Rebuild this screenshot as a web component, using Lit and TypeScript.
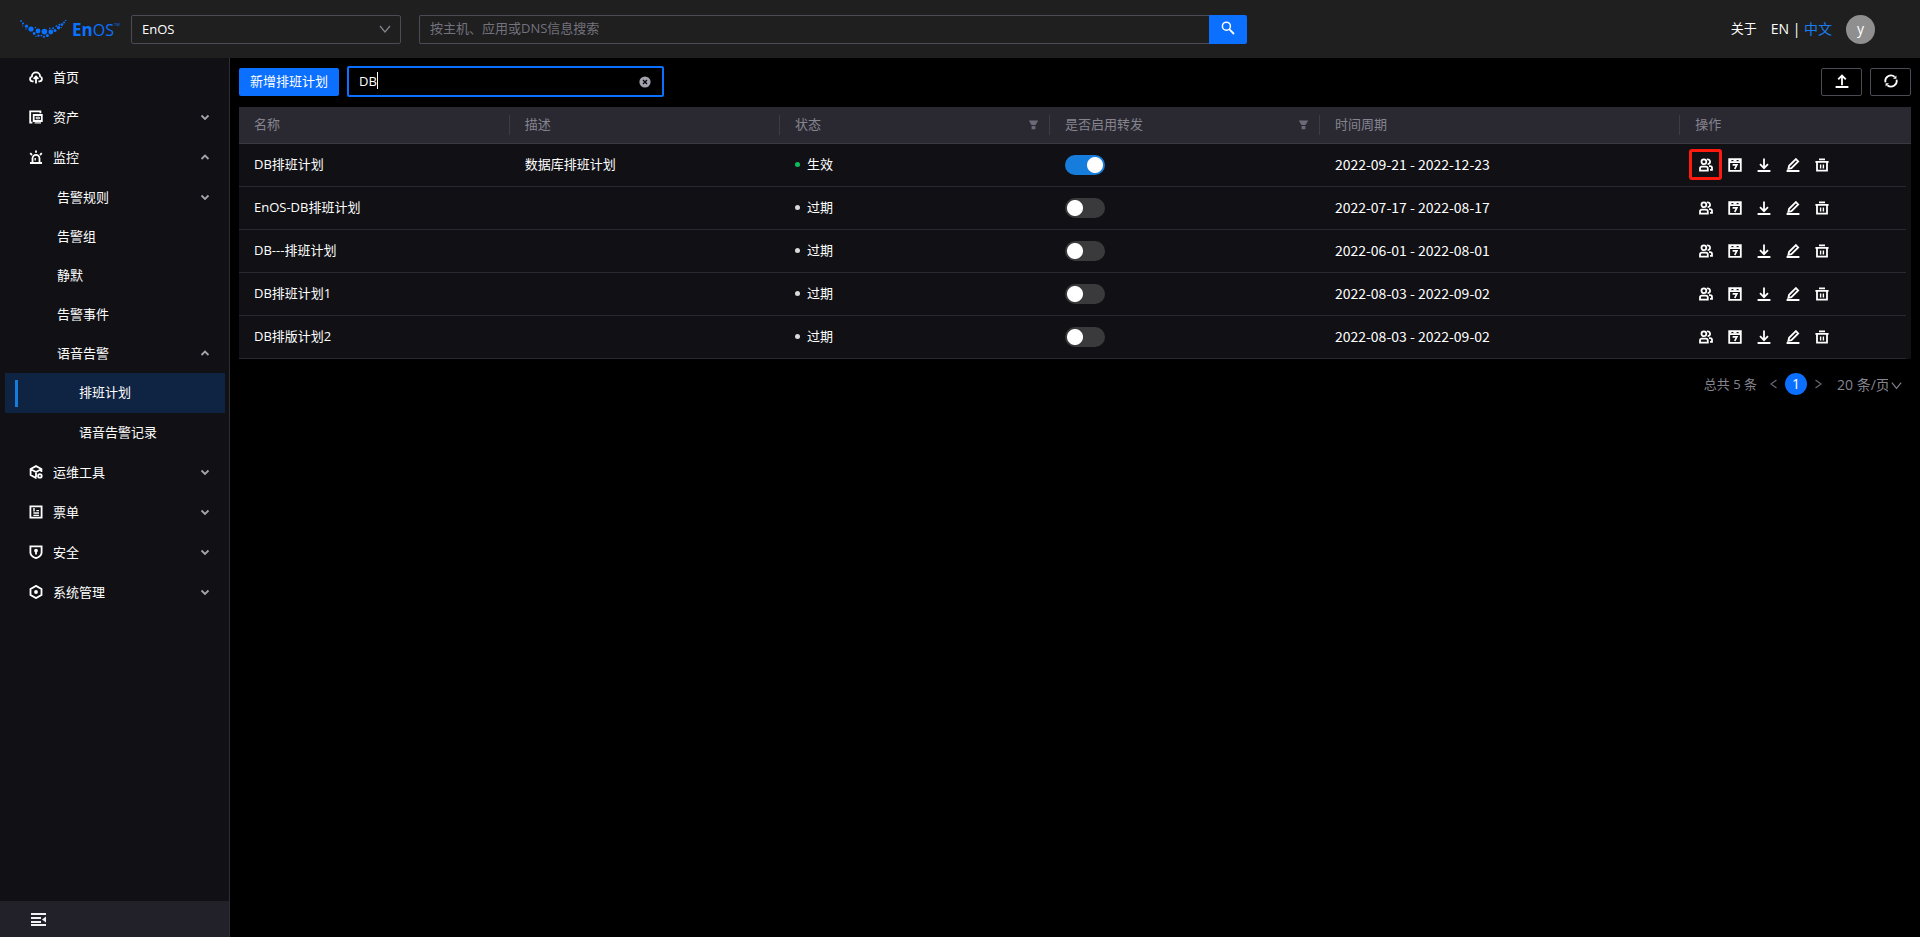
import { LitElement, html, css, svg, nothing } from "lit";
import { customElement, property, state } from "lit/decorators.js";
import { classMap } from "lit/directives/class-map.js";

const icons: Record<string, unknown> = {
  home: svg`<path d="M4.6 11.4H3.4A2.5 2.5 0 0 1 2.9 6.5 4.1 4.1 0 0 1 11.1 6.5 2.5 2.5 0 0 1 10.6 11.4H9.4" /><path d="M7 13.4V6.8M4.6 8.8 7 6.4l2.4 2.4" />`,
  asset: svg`<path d="M3.4 12.6H1.2V1.4H11.4V3.2" /><path d="M4.7 5H12.8V11H4.7Z" /><path d="M5.6 12.9H12" stroke-width="1.2" /><path d="M7.2 7.2H10.4V8.8H7.2Z" stroke-width="1" />`,
  alarm: svg`<path d="M1 13H13M3.5 13V8.4A3.5 3.5 0 0 1 10.5 8.4V13M7 .6V2.8M1.2 3.2 3 5M12.8 3.2 11 5" /><path d="M6.2 8V10.6" stroke-width="1.3" />`,
  tools: svg`<path d="M7.4 12.8 7 13 1.6 10V4L7 1.1 12.4 4V7M1.8 4.2 7 7 12.2 4.2M7 7V12.6" /><circle cx="10.9" cy="10.9" r="1.8" />`,
  ticket: svg`<path d="M1.4 1.4H12.6V12.6H1.4Z" /><path d="M5 3V6.4M7.4 5.6H10M4.4 8H10M4.4 10.4H10" stroke-width="1.4" />`,
  shield: svg`<path d="M1.4 1.4H12.6V7.4C12.6 10 10 12 7 13.2 4 12 1.4 10 1.4 7.4Z" /><circle cx="7" cy="5.6" r="1" /><path d="M7 6V9.6" />`,
  system: svg`<path d="M7 .9 12.5 4V10L7 13.1 1.5 10V4Z" /><circle cx="7" cy="7" r="1" fill="currentColor" />`,
  users: svg`<circle cx="4.9" cy="3.8" r="2.4" /><path d="M8 1.5A2.4 2.4 0 1 1 8.6 6.2" /><path d="M1 12.6V10.4A1.8 1.8 0 0 1 2.8 8.6H7A1.8 1.8 0 0 1 8.8 10.4V12.6ZM10 8.2H11.2A1.8 1.8 0 0 1 13 10V11.8H11" />`,
  calendar: svg`<path d="M1.2 1.2H12.8V12.8H1.2Z" /><path d="M1 4.1H13" stroke-width="1.8" /><path d="M2 2.6H3.4M5.4 2.6H8.6M10.6 2.6H12" stroke-width="2" /><path d="M4.6 6.9H8.9L6.7 11" stroke-width="1.6" />`,
  download: svg`<path d="M.6 13H13.4M7 .6V10M3 6.2 7 10.2 11 6.2" />`,
  edit: svg`<path d="M.6 13H13.4M2.4 10.8 3.1 7.8 9.9 1.1 12.2 3.4 5.4 10.2Z" />`,
  trash: svg`<path d="M.4 3.9H13.6M4 1.3H10M2 4V12.7H12V4" /><path d="M5.6 6.4V10.4M8.4 6.4V10.4" stroke-width="1.4" />`,
  upload: svg`<path d="M.6 13H13.4M7 11.2V1.8M3.2 5.4 7 1.6 10.8 5.4" />`,
  refresh: svg`<path d="M1.5 8.4A5.6 5.6 0 0 1 10.6 2.8M12.5 5.6A5.6 5.6 0 0 1 3.4 11.2" /><path d="M12.4 1.4V4.8H9ZM1.6 12.6V9.2H5Z" fill="currentColor" stroke="none" />`,
  down: svg`<path d="M3.5 5.5 7 9 10.5 5.5" />`,
  up: svg`<path d="M3.5 9 7 5.5 10.5 9" />`,
  search: svg`<circle cx="5.4" cy="5.2" r="4" stroke-width="1.5" /><path d="M8.2 8.2 13 13" />`,
  filter: svg`<path d="M1 2H13L9.6 7.6H4.4ZM4.6 9H9.4V13H4.6Z" fill="currentColor" stroke="none" />`,
  clear: svg`<circle cx="7" cy="7" r="5.6" fill="currentColor" stroke="none" /><path d="M5 5 9 9M9 5 5 9" stroke="#000" stroke-width="1.2" />`,
  prev: svg`<path d="M9.5 3 4 7 9.5 11" stroke-width="1.1" />`,
  next: svg`<path d="M4.5 3 10 7 4.5 11" stroke-width="1.1" />`,
  arrow: svg`<path d="M2 4 7 10 12 4" stroke-width="1.2" />`,
};

@customElement("app-icon")
export class AppIcon extends LitElement {
  @property() name = "";
  static styles = css`
    :host { display: inline-flex; flex: none; width: 14px; height: 14px; }
    svg { width: 100%; height: 100%; fill: none; stroke: currentColor; stroke-width: 1.8; }
  `;
  render() {
    return html`<svg viewBox="0 0 14 14" aria-hidden="true">${icons[this.name]}</svg>`;
  }
}

interface MenuItem {
  label: string;
  level: number;
  icon?: string;
  toggle?: "up" | "down";
  selected?: boolean;
}

const menu: MenuItem[] = [
  { label: "首页", level: 1, icon: "home" },
  { label: "资产", level: 1, icon: "asset", toggle: "down" },
  { label: "监控", level: 1, icon: "alarm", toggle: "up" },
  { label: "告警规则", level: 2, toggle: "down" },
  { label: "告警组", level: 2 },
  { label: "静默", level: 2 },
  { label: "告警事件", level: 2 },
  { label: "语音告警", level: 2, toggle: "up" },
  { label: "排班计划", level: 3, selected: true },
  { label: "语音告警记录", level: 3 },
  { label: "运维工具", level: 1, icon: "tools", toggle: "down" },
  { label: "票单", level: 1, icon: "ticket", toggle: "down" },
  { label: "安全", level: 1, icon: "shield", toggle: "down" },
  { label: "系统管理", level: 1, icon: "system", toggle: "down" },
];

interface Plan {
  name: string;
  desc: string;
  active: boolean;
  period: string;
}

const plans: Plan[] = [
  { name: "DB排班计划", desc: "数据库排班计划", active: true, period: "2022-09-21 - 2022-12-23" },
  { name: "EnOS-DB排班计划", desc: "", active: false, period: "2022-07-17 - 2022-08-17" },
  { name: "DB---排班计划", desc: "", active: false, period: "2022-06-01 - 2022-08-01" },
  { name: "DB排班计划1", desc: "", active: false, period: "2022-08-03 - 2022-09-02" },
  { name: "DB排版计划2", desc: "", active: false, period: "2022-08-03 - 2022-09-02" },
];

const actions = [
  ["users", "人员"],
  ["calendar", "日历"],
  ["download", "下载"],
  ["edit", "编辑"],
  ["trash", "删除"],
];

const logoDots = [
  [1, 2, 0.9], [3, 4.5, 1.1], [2.6, 7, 0.6], [6.5, 7.2, 1.6], [6, 10, 0.7], [11, 10, 2.6], [15.4, 8.5, 0.8],
  [14.2, 14.5, 1.4], [18, 12, 2.4], [18.5, 16.6, 1.2], [16, 17.4, 0.7], [21.4, 16.6, 0.9], [24.4, 12.6, 2.8], [24, 17.8, 1.1],
  [27.4, 16.5, 1.5], [30.8, 13, 2.4], [29.8, 9.4, 0.8], [33.2, 9.2, 1], [35, 11.6, 1.5], [38.6, 8.8, 1.7], [36.4, 7.2, 0.9], [39.4, 5.8, 1],
  [42, 5.6, 1.3], [41.4, 8.4, 0.6], [44, 3.6, 1], [45.6, 1.5, 0.8],
];

@customElement("app-root")
export class AppRoot extends LitElement {
  @state() private keyword = "DB";

  static styles = css`
    :host {
      display: flex;
      flex-direction: column;
      min-height: 100vh;
      background: #000;
      color: #fff;
      font: 13px/20px "Open Sans", "Noto Sans CJK SC", sans-serif;
    }
    * { box-sizing: border-box; }
    button, input, select { font: inherit; color: inherit; margin: 0; border: 0; padding: 0; background: none; border-radius: 0; outline: none; }
    button { cursor: pointer; display: inline-flex; align-items: center; justify-content: center; }
    select { appearance: none; width: 100%; }
    select option { background: #1f1f1f; }
    a { color: inherit; text-decoration: none; }

    .header { display: flex; align-items: center; height: 58px; padding: 0 45px 0 20px; background: #1f1f1f; }
    .logo { display: flex; width: 111px; height: 30px; }
    .logo svg { width: 102px; height: 30px; }
    .logo text { fill: #0b72ff; font: 17px/20px "Open Sans", sans-serif; }
    .logo .thin { font-size: 16px; }
    .logo .bold { font-weight: 700; }
    .logo .mark { font-size: 4px; }
    .picker { display: flex; align-items: center; width: 270px; height: 29px; padding: 0 8px 0 10px; border: 1px solid #4b4a55; border-radius: 2px; color: #fff; }
    .muted { color: #85848f; }
    .search { display: flex; width: 828px; height: 29px; margin-left: 18px; }
    .search input { flex: 1; min-width: 0; padding: 0 10px 2px; border: 1px solid #4b4a55; border-right: 0; border-radius: 2px 0 0 2px; }
    .search input::placeholder { color: #73727d; opacity: 1; }
    .search button { width: 38px; padding-bottom: 2px; background: #0b6fff; color: #fff; border-radius: 0 2px 2px 0; }
    .user { display: flex; align-items: center; margin-left: auto; }
    .user > a { padding-bottom: 2px; }
    .lang { margin: 0 14px; font-size: 14px; white-space: pre; }
    .lang .on { color: #1b7cf0; }
    .avatar { display: grid; place-items: center; width: 29px; height: 29px; border-radius: 50%; background: #8f8f8f; color: #fff; font-size: 14px; }

    .body { display: flex; flex: 1; }
    .side { display: flex; flex-direction: column; flex: none; width: 230px; background: #111115; border-right: 1px solid #2f2e36; }
    .menu { list-style: none; margin: 0; padding: 0 4px 0 5px; flex: 1; }
    .item { display: flex; align-items: center; gap: 10px; height: 40px; padding: 0 13px 2px 24px; }
    .item .toggle { margin-left: auto; color: #a3a3ab; }
    .level2 { height: 39px; padding-left: 52px; }
    .level3 { padding-left: 74px; }
    .selected { background: linear-gradient(#177ddc, #177ddc) 10px center / 3px 27px no-repeat #0f2342; }
    .collapse { height: 36px; padding: 2px 0 0 30px; justify-content: flex-start; background: #22212a; }
    .collapse svg { width: 16px; height: 14px; fill: #f2f2f4; }

    .main { flex: 1; min-width: 0; padding: 8px 9px; }
    .toolbar { display: flex; align-items: center; height: 31px; gap: 8px; }
    .primary { height: 28px; width: 100px; padding-bottom: 2px; background: #0b6fff; color: #fff; border-radius: 2px; }
    .filter { position: relative; display: flex; align-items: center; width: 317px; height: 31px; padding: 0 10px; border: 2px solid #0b6fff; border-radius: 2px; margin-right: auto; }
    .filter input { flex: 1; min-width: 0; padding-bottom: 2px; color: #fff; caret-color: transparent; }
    .caret { position: absolute; left: 28px; top: 4px; width: 1px; height: 17px; background: #fff; }
    .filter button { color: #a3a2ad; }
    .square { width: 41px; height: 28px; padding-bottom: 2px; border: 1px solid #4b4a55; border-radius: 2px; color: #fff; }

    .card { margin-top: 10px; background: #111115; border-radius: 2px; }
    table { width: 100%; table-layout: fixed; border-collapse: separate; border-spacing: 0; }
    .w1 { width: 16.2%; }
    .w2 { width: 16.15%; }
    .w3 { width: 21.55%; }
    th { height: 37px; padding: 0 11px 2px 15px; border-bottom: 1px solid #3a3943; background: linear-gradient(#3d3c46, #3d3c46) right center / 1px 20px no-repeat #2a2932; color: #85848f; font-weight: 400; text-align: left; }
    th:last-child { background: #2a2932; }
    .head { display: flex; align-items: center; justify-content: space-between; }
    .head app-icon { width: 11px; height: 11px; color: #6b6a76; }
    td { height: 43px; padding: 0 15px 2px; border-bottom: 1px solid #2a2932; color: #fff; }
    .toggle-cell { padding-bottom: 0; }
    td:last-child { border-bottom: 0; padding: 0 11px 2px; background: linear-gradient(#2a2932, #2a2932) left bottom / calc(100% - 5px) 1px no-repeat; }
    .status::before { content: ""; display: inline-block; width: 5px; height: 5px; margin-right: 7px; border-radius: 50%; background: #d9d9d9; vertical-align: 2px; }
    .status.live::before { background: #0abf5b; }
    .period { font-family: "Noto Sans CJK SC", sans-serif; font-size: 14px; }
    .switch { appearance: none; display: block; width: 40px; height: 20px; border-radius: 10px; background: radial-gradient(circle at 10px 10px, #fff 7.5px, transparent 8.5px) #3a3a3c; cursor: pointer; }
    .switch:checked { background: radial-gradient(circle at 30px 10px, #fff 7.5px, transparent 8.5px) #177ddc; }
    .ops { display: flex; }
    .ops button { width: 29px; height: 27px; }
    .marked { outline: 3px solid #ff1a0f; outline-offset: -1px; border-radius: 1px; }

    .pager { display: flex; align-items: center; justify-content: flex-end; margin-top: 14px; padding-right: 8px; height: 22px; color: #85848f; font-size: 14px; }
    .pager .turn { width: 14px; height: 22px; color: #6b6a76; }
    .total { margin-right: 10px; font-size: 13px; }
    .page { width: 22px; height: 22px; margin: 0 4px; border-radius: 50%; background: #0b6fff; color: #fff; }
    .size { display: flex; align-items: center; gap: 2px; margin-left: 12px; padding-top: 2px; }
    .size select { width: 51px; }
    .size app-icon { width: 13px; height: 13px; }
  `;

  private renderItem(m: MenuItem) {
    return html`<li>
      <a href="#" class=${classMap({ item: true, [`level${m.level}`]: true, selected: !!m.selected })}>
        ${m.icon ? html`<app-icon name=${m.icon}></app-icon>` : nothing}
        <span>${m.label}</span>
        ${m.toggle ? html`<app-icon class="toggle" name=${m.toggle}></app-icon>` : nothing}
      </a>
    </li>`;
  }

  private renderRow(p: Plan, first: boolean) {
    return html`<tr>
      <td>${p.name}</td>
      <td>${p.desc}</td>
      <td><span class=${classMap({ status: true, live: p.active })}>${p.active ? "生效" : "过期"}</span></td>
      <td class="toggle-cell"><input class="switch" type="checkbox" role="switch" aria-label="是否启用转发" .checked=${p.active} /></td>
      <td class="period">${p.period}</td>
      <td>
        <div class="ops">
          ${actions.map(
            ([icon, label], i) => html`<button class=${classMap({ marked: first && i === 0 })} aria-label=${label}>
              <app-icon name=${icon}></app-icon>
            </button>`
          )}
        </div>
      </td>
    </tr>`;
  }

  render() {
    return html`
      <header class="header">
        <a class="logo" href="#" aria-label="EnOS">
          <svg viewBox="0 0 102 30">
            <g fill="#0b72ff" transform="translate(0 5)">
              ${logoDots.map(([x, y, r]) => svg`<circle cx=${x} cy=${y} r=${r} />`)}
            </g>
            <text x="52" y="22"><tspan class="bold">En</tspan><tspan class="thin">OS</tspan></text>
            <text class="mark" x="94" y="12">TM</text>
          </svg>
        </a>
        <label class="picker">
          <select aria-label="组织"><option>EnOS</option></select>
          <app-icon class="muted" name="arrow"></app-icon>
        </label>
        <form class="search" @submit=${(e: Event) => e.preventDefault()}>
          <input type="text" aria-label="搜索" placeholder="按主机、应用或DNS信息搜索" />
          <button aria-label="搜索"><app-icon name="search"></app-icon></button>
        </form>
        <div class="user">
          <a href="#">关于</a>
          <span class="lang"><a href="#">EN</a> | <a class="on" href="#">中文</a></span>
          <span class="avatar">y</span>
        </div>
      </header>
      <div class="body">
        <nav class="side">
          <ul class="menu">${menu.map((m) => this.renderItem(m))}</ul>
          <button class="collapse" aria-label="收起">
            <svg viewBox="0 0 16 14"><path d="M1 0H16V2H1ZM1 4H11V6H1ZM1 8H11V10H1ZM1 11H16V13H1ZM16 3.4V9.6L12 6.5Z" /></svg>
          </button>
        </nav>
        <main class="main">
          <div class="toolbar">
            <button class="primary">新增排班计划</button>
            <div class="filter">
              <input
                type="text"
                aria-label="名称"
                .value=${this.keyword}
                @input=${(e: Event) => (this.keyword = (e.target as HTMLInputElement).value)}
              />
              <span class="caret"></span>
              <button aria-label="清除" @click=${() => (this.keyword = "")}><app-icon name="clear"></app-icon></button>
            </div>
            <button class="square" aria-label="上传"><app-icon name="upload"></app-icon></button>
            <button class="square" aria-label="刷新"><app-icon name="refresh"></app-icon></button>
          </div>
          <div class="card">
            <table>
              <colgroup><col class="w1" /><col class="w2" /><col class="w2" /><col class="w2" /><col class="w3" /><col /></colgroup>
              <thead>
                <tr>
                  <th>名称</th>
                  <th>描述</th>
                  <th><div class="head">状态<app-icon name="filter"></app-icon></div></th>
                  <th><div class="head">是否启用转发<app-icon name="filter"></app-icon></div></th>
                  <th>时间周期</th>
                  <th>操作</th>
                </tr>
              </thead>
              <tbody>${plans.map((p, i) => this.renderRow(p, i === 0))}</tbody>
            </table>
          </div>
          <div class="pager">
            <span class="total">总共 5 条</span>
            <button class="turn" aria-label="上一页"><app-icon name="prev"></app-icon></button>
            <button class="page">1</button>
            <button class="turn" aria-label="下一页"><app-icon name="next"></app-icon></button>
            <label class="size">
              <select aria-label="每页条数"><option>20 条/页</option></select>
              <app-icon name="arrow"></app-icon>
            </label>
          </div>
        </main>
      </div>
    `;
  }
}
